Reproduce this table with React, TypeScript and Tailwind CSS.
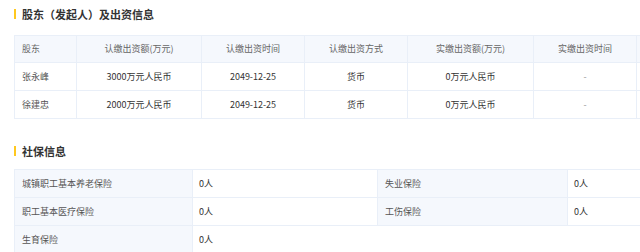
const holders = [
  { name: "张永峰", amount: "3000万元人民币", date: "2049-12-25", way: "货币", paid: "0万元人民币", paidDate: "-" },
  { name: "徐建忠", amount: "2000万元人民币", date: "2049-12-25", way: "货币", paid: "0万元人民币", paidDate: "-" },
];

const cols = ["股东", "认缴出资额(万元)", "认缴出资时间", "认缴出资方式", "实缴出资额(万元)", "实缴出资时间", ""];

const insurance = [
  ["城镇职工基本养老保险", "0人", "失业保险", "0人"],
  ["职工基本医疗保险", "0人", "工伤保险", "0人"],
  ["生育保险", "0人", "", ""],
];

function Title({ text }: { text: string }) {
  return (
    <div className="flex items-center gap-[6px] h-[10px]">
      <span className="w-[2px] h-[10px] bg-[#ffc81f]" />
      <span className="text-[11px] font-bold text-[#333] leading-none">{text}</span>
    </div>
  );
}

export default function App() {
  return (
    <div
      className="w-[640px] h-[252px] overflow-hidden bg-white pl-[14px]"
      style={{ fontFamily: '"Noto Sans CJK SC", "Noto Sans", sans-serif' }}
    >
      {/* 股东 */}
      <div className="pt-[9px]">
        <Title text="股东（发起人）及出资信息" />
      </div>
      <table className="mt-[16px] border-collapse table-fixed w-[720px] text-[9px]">
        <colgroup>
          <col className="w-[62px]" />
          <col className="w-[125px]" />
          <col className="w-[103px]" />
          <col className="w-[103px]" />
          <col className="w-[126px]" />
          <col className="w-[103px]" />
          <col />
        </colgroup>
        <thead>
          <tr className="h-[27px] bg-[#f5f8fd]">
            {cols.map((c, i) => (
              <th
                key={i}
                className={
                  "border border-[#e9eff8] font-normal text-[#666] " +
                  (i === 0 ? "text-left pl-[7px]" : "text-center")
                }
              >
                {c}
              </th>
            ))}
          </tr>
        </thead>
        <tbody>
          {holders.map((h) => (
            <tr key={h.name} className="h-[28px] text-[#333]">
              <td className="border border-[#e9eff8] pl-[7px] text-[#555]">{h.name}</td>
              <td className="border border-[#e9eff8] text-center">{h.amount}</td>
              <td className="border border-[#e9eff8] text-center">{h.date}</td>
              <td className="border border-[#e9eff8] text-center">{h.way}</td>
              <td className="border border-[#e9eff8] text-center">{h.paid}</td>
              <td className="border border-[#e9eff8] text-center text-[#999]">{h.paidDate}</td>
              <td className="border border-[#e9eff8]" />
            </tr>
          ))}
        </tbody>
      </table>

      {/* 社保 */}
      <div className="pt-[27px]">
        <Title text="社保信息" />
      </div>
      <table className="mt-[13px] border-collapse table-fixed w-[720px] text-[9px]">
        <colgroup>
          <col className="w-[178px]" />
          <col className="w-[185px]" />
          <col className="w-[190px]" />
          <col />
        </colgroup>
        <tbody>
          {insurance.map((r, i) => (
            <tr key={i} className="h-[28px]">
              <td className="border border-[#e9eff8] bg-[#f5f8fd] pl-[7px] text-[#555]">{r[0]}</td>
              {r[2] ? (
                <>
                  <td className="border border-[#e9eff8] pl-[6px] text-[#333]">{r[1]}</td>
                  <td className="border border-[#e9eff8] bg-[#f5f8fd] pl-[7px] text-[#555]">{r[2]}</td>
                  <td className="border border-[#e9eff8] pl-[6px] text-[#333]">{r[3]}</td>
                </>
              ) : (
                <td colSpan={3} className="border-y border-[#e9eff8] pl-[6px] text-[#333]">
                  {r[1]}
                </td>
              )}
            </tr>
          ))}
        </tbody>
      </table>
    </div>
  );
}
